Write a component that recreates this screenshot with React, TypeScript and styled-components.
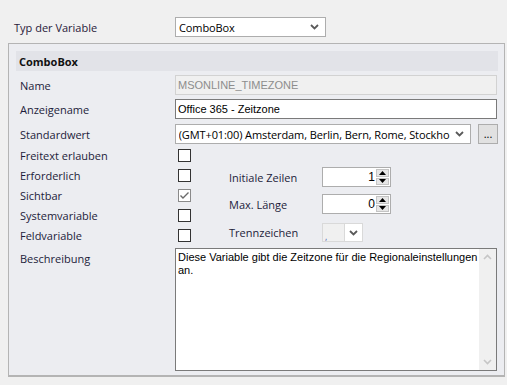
import React from "react";
import styled, { createGlobalStyle } from "styled-components";

const GlobalStyle = createGlobalStyle`
  html, body {
    margin: 0;
    padding: 0;
    background: #f0f0f0;
    overflow: hidden;
  }
  body {
    width: 507px;
    height: 385px;
    font-family: "Open Sans", "Noto Sans", sans-serif;
    font-size: 11px;
    color: #1c1c3a;
  }
`;

const Page = styled.div`
  display: flex;
  flex-direction: column;
  padding-top: 17px;
  width: 507px;
`;

const TopRow = styled.div`
  display: flex;
  align-items: center;
  height: 20px;
`;

const TopLabel = styled.div`
  width: 161px;
  padding-left: 14px;
  font-size: 11px;
  color: #2a1a3a;
`;

const Panel = styled.section`
  margin: 6px 0 0 8px;
  width: 482px;
  height: 324px;
  background: #ecedf1;
  border: 1px solid #b4b4b4;
  border-bottom-width: 2px;
  padding: 7px 6px 0 7px;
  display: flex;
  flex-direction: column;
`;

const Header = styled.div`
  height: 20px;
  width: 482px;
  background: #e2e3e8;
  display: flex;
  align-items: center;
  padding-left: 3px;
  box-sizing: border-box;
  font-weight: 700;
  font-size: 11px;
  color: #111;
`;

const FieldRow = styled.div<{ $top: number }>`
  display: flex;
  align-items: center;
  margin-top: ${(p) => p.$top}px;
  height: 20px;
`;

const Label = styled.div`
  width: 155px;
  padding-left: 4px;
  font-size: 11px;
  white-space: nowrap;
`;

const TextInput = styled.div<{ $disabled?: boolean; $dark?: boolean }>`
  width: 322px;
  height: 20px;
  box-sizing: border-box;
  border: 1px solid ${(p) => (p.$disabled ? "#d2d2d2" : p.$dark ? "#7a7a7a" : "#adadad")};
  background: ${(p) => (p.$disabled ? "#f0f0f0" : "#fff")};
  color: ${(p) => (p.$disabled ? "#8d8d8d" : "#000")};
  font-family: "Liberation Sans", Arial, sans-serif;
  font-size: 11px;
  display: flex;
  align-items: center;
  padding-left: 2px;
  white-space: nowrap;
  overflow: hidden;
`;

const Combo = styled.div<{ $width: number }>`
  width: ${(p) => p.$width}px;
  height: 20px;
  box-sizing: border-box;
  border: 1px solid #adadad;
  background: #fff;
  display: flex;
  align-items: center;
  padding: 0 6px 0 3px;
  gap: 4px;
  color: #000;
`;

const ComboText = styled.span`
  flex: 1;
  overflow: hidden;
  white-space: nowrap;
  font-size: 11px;
  letter-spacing: -0.1px;
`;

const DotsButton = styled.div`
  width: 20px;
  height: 20px;
  margin-left: 7px;
  box-sizing: border-box;
  border: 1px solid #adadad;
  background: #e1e1e1;
  display: flex;
  align-items: center;
  justify-content: center;
  font-size: 11px;
  color: #000;
  padding-bottom: 2px;
`;

const Options = styled.div`
  display: flex;
  margin-top: 1px;
`;

const CheckColumn = styled.div`
  display: flex;
  flex-direction: column;
`;

const CheckRow = styled.div`
  display: flex;
  align-items: center;
  height: 20px;
`;

const CheckCell = styled.div`
  width: 51px;
  padding-left: 3px;
  display: flex;
  align-items: center;
`;

const Box = styled.div<{ $checked?: boolean }>`
  width: 13px;
  height: 13px;
  box-sizing: border-box;
  border: 1px solid ${(p) => (p.$checked ? "#8a8a8a" : "#333")};
  background: #fff;
  display: flex;
  align-items: center;
  justify-content: center;
`;

const SubForm = styled.div`
  display: flex;
  flex-direction: column;
  padding-top: 22px;
`;

const SubRow = styled.div<{ $top: number }>`
  display: flex;
  align-items: center;
  margin-top: ${(p) => p.$top}px;
`;

const SubLabel = styled.div`
  width: 93px;
  font-size: 11px;
  white-space: nowrap;
`;

const Spinner = styled.div`
  width: 69px;
  height: 20px;
  box-sizing: border-box;
  border: 1px solid #adadad;
  background: #fff;
  display: flex;
  align-items: stretch;
`;

const SpinValue = styled.div`
  flex: 1;
  text-align: right;
  font-family: "Liberation Sans", Arial, sans-serif;
  font-size: 12px;
  line-height: 18px;
  padding-right: 1px;
  color: #000;
`;

const SpinButtons = styled.div`
  width: 13px;
  display: flex;
  flex-direction: column;
  gap: 1px;
  padding: 1px 0;
  margin-right: 1px;
`;

const SpinButton = styled.div`
  flex: 1;
  background: #e6e6e6;
  border: 1px solid #c4c4c4;
  display: flex;
  align-items: center;
  justify-content: center;
`;

const SmallCombo = styled.div`
  width: 41px;
  height: 19px;
  box-sizing: border-box;
  border: 1px solid #d9d9d9;
  background: #fff;
  display: flex;
`;

const SmallComboField = styled.div`
  width: 21px;
  background: #f0f0f0;
  border-right: 1px solid #d9d9d9;
  position: relative;
  font-size: 9px;
  color: #4a5ab0;
`;

const SmallComboArrow = styled.div`
  flex: 1;
  display: flex;
  align-items: center;
  justify-content: center;
`;

const DescRow = styled.div`
  display: flex;
  align-items: flex-start;
  margin-top: 3px;
`;

const DescLabel = styled(Label)`
  padding-top: 3px;
`;

const TextArea = styled.div`
  width: 322px;
  height: 123px;
  box-sizing: border-box;
  border: 1px solid #7a7a7a;
  background: #fff;
  display: flex;
`;

const AreaText = styled.div`
  flex: 1;
  padding: 2px 0 0 2px;
  font-family: "Liberation Sans", Arial, sans-serif;
  font-size: 11px;
  line-height: 13px;
  color: #000;
  white-space: pre;
  overflow: hidden;
`;

const ScrollBar = styled.div`
  width: 17px;
  background: #f0f0f0;
  display: flex;
  flex-direction: column;
  justify-content: space-between;
  align-items: center;
  padding: 5px 0;
`;

const Chevron = ({ color = "#5a5a5a" }: { color?: string }) => (
  <svg width="9" height="6" viewBox="0 0 9 6">
    <polyline points="1,1 4.5,4.5 8,1" fill="none" stroke={color} strokeWidth="1.8" />
  </svg>
);

const Tri = ({ up }: { up?: boolean }) => (
  <svg width="7" height="4" viewBox="0 0 7 4">
    <polygon points={up ? "0,4 7,4 3.5,0" : "0,0 7,0 3.5,4"} fill="#000" />
  </svg>
);

const ScrollArrow = ({ up }: { up?: boolean }) => (
  <svg width="9" height="6" viewBox="0 0 9 6">
    <polyline
      points={up ? "1,5 4.5,1.5 8,5" : "1,1 4.5,4.5 8,1"}
      fill="none"
      stroke="#c6c6c6"
      strokeWidth="1.6"
    />
  </svg>
);

const Check = () => (
  <svg width="11" height="11" viewBox="0 0 11 11">
    <polyline points="1.5,5.5 4,8 9.5,2.5" fill="none" stroke="#6a6a6a" strokeWidth="1.4" />
  </svg>
);

const checks = [
  { label: "Freitext erlauben", checked: false },
  { label: "Erforderlich", checked: false },
  { label: "Sichtbar", checked: true },
  { label: "Systemvariable", checked: false },
  { label: "Feldvariable", checked: false },
];

export default function App() {
  return (
    <>
      <GlobalStyle />
      <Page>
        <TopRow>
          <TopLabel>Typ der Variable</TopLabel>
          <Combo $width={151}>
            <ComboText>ComboBox</ComboText>
            <Chevron />
          </Combo>
        </TopRow>
        <Panel>
          <Header>ComboBox</Header>
          <FieldRow $top={4}>
            <Label>Name</Label>
            <TextInput $disabled>MSONLINE_TIMEZONE</TextInput>
          </FieldRow>
          <FieldRow $top={4}>
            <Label>Anzeigename</Label>
            <TextInput $dark>Office 365 - Zeitzone</TextInput>
          </FieldRow>
          <FieldRow $top={5}>
            <Label>Standardwert</Label>
            <Combo $width={297}>
              <ComboText>(GMT+01:00) Amsterdam, Berlin, Bern, Rome, Stockho</ComboText>
              <Chevron />
            </Combo>
            <DotsButton>...</DotsButton>
          </FieldRow>
          <Options>
            <CheckColumn>
              {checks.map((c) => (
                <CheckRow key={c.label}>
                  <Label>{c.label}</Label>
                  <CheckCell>
                    <Box $checked={c.checked}>{c.checked && <Check />}</Box>
                  </CheckCell>
                </CheckRow>
              ))}
            </CheckColumn>
            <SubForm>
              <SubRow $top={0}>
                <SubLabel>Initiale Zeilen</SubLabel>
                <Spinner>
                  <SpinValue>1</SpinValue>
                  <SpinButtons>
                    <SpinButton>
                      <Tri up />
                    </SpinButton>
                    <SpinButton>
                      <Tri />
                    </SpinButton>
                  </SpinButtons>
                </Spinner>
              </SubRow>
              <SubRow $top={7}>
                <SubLabel>Max. Länge</SubLabel>
                <Spinner>
                  <SpinValue>0</SpinValue>
                  <SpinButtons>
                    <SpinButton>
                      <Tri up />
                    </SpinButton>
                    <SpinButton>
                      <Tri />
                    </SpinButton>
                  </SpinButtons>
                </Spinner>
              </SubRow>
              <SubRow $top={9}>
                <SubLabel>Trennzeichen</SubLabel>
                <SmallCombo>
                  <SmallComboField>
                    <span style={{ position: "absolute", left: 2, bottom: -2 }}>,</span>
                  </SmallComboField>
                  <SmallComboArrow>
                    <Chevron />
                  </SmallComboArrow>
                </SmallCombo>
              </SubRow>
            </SubForm>
          </Options>
          <DescRow>
            <DescLabel>Beschreibung</DescLabel>
            <TextArea>
              <AreaText>{"Diese Variable gibt die Zeitzone für die Regionaleinstellungen\nan."}</AreaText>
              <ScrollBar>
                <ScrollArrow up />
                <ScrollArrow />
              </ScrollBar>
            </TextArea>
          </DescRow>
        </Panel>
      </Page>
    </>
  );
}
